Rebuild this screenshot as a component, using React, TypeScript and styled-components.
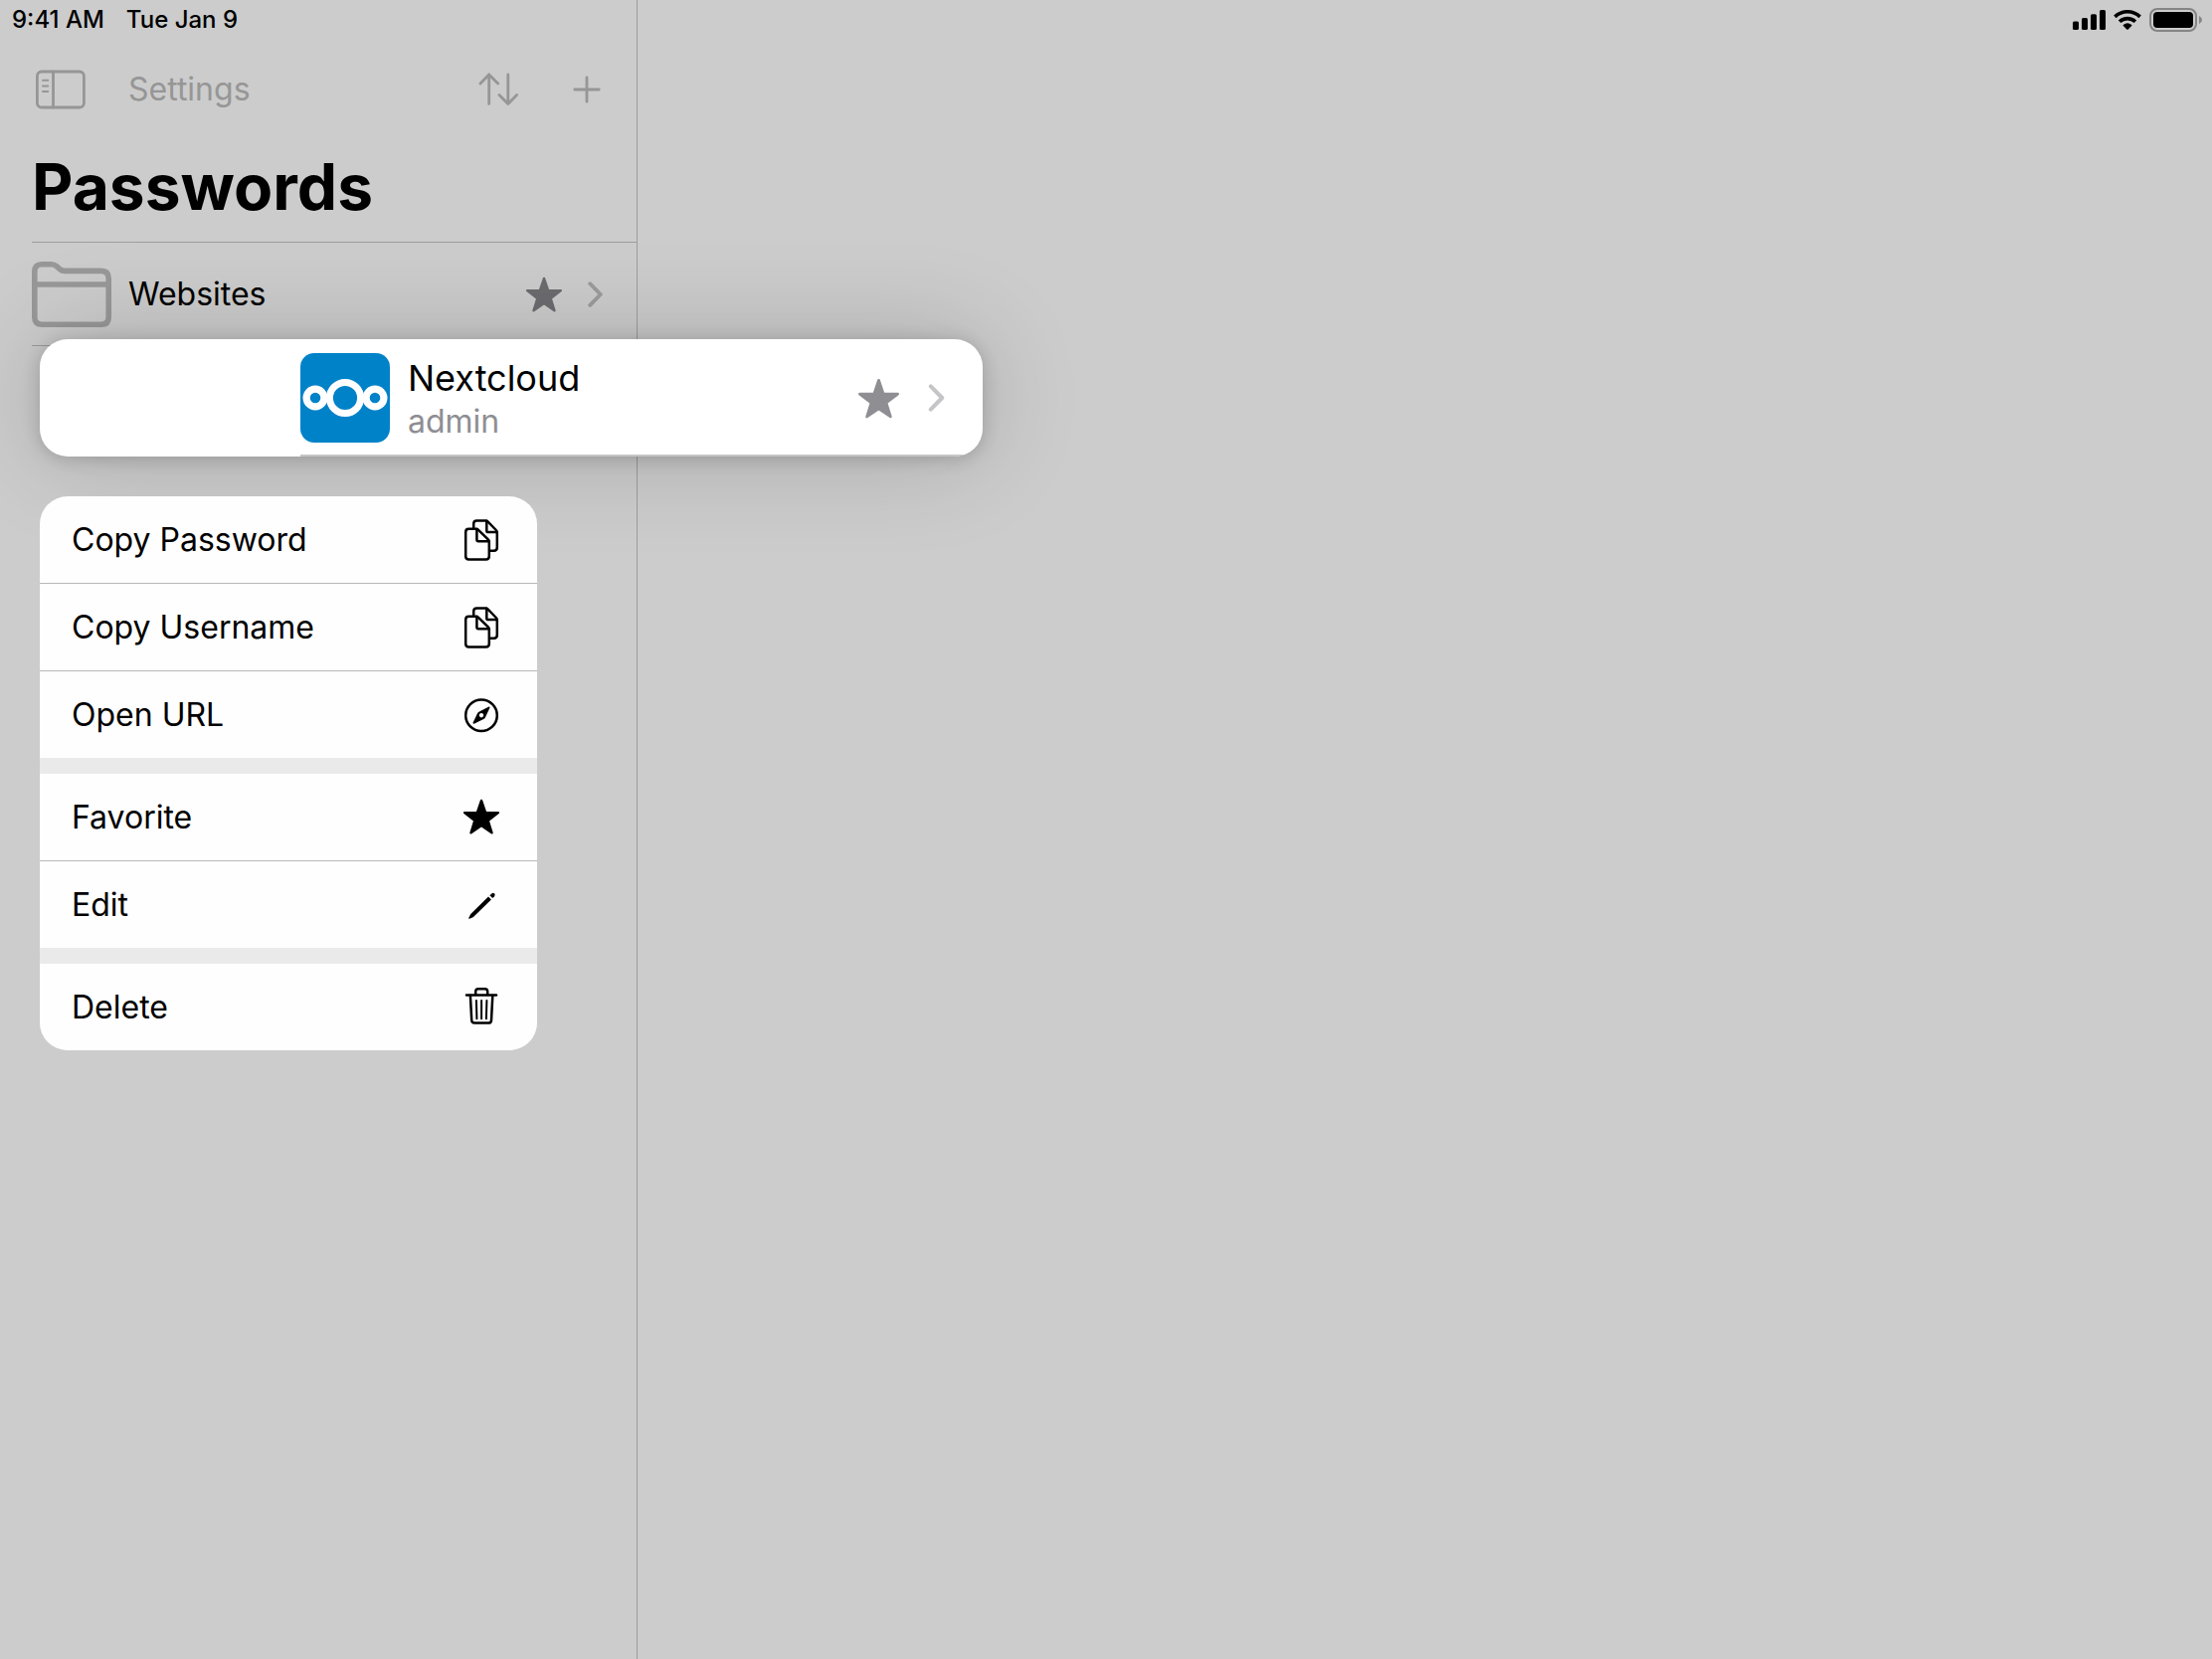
import React from "react";
import styled, { createGlobalStyle } from "styled-components";

const GlobalStyle = createGlobalStyle`
  *, *::before, *::after { box-sizing: border-box; }
  body {
    margin: 0;
    background: #cccccc;
    color: #000;
    font-family: Inter, "Liberation Sans", sans-serif;
  }
  button, a { font: inherit; color: inherit; }
`;

const Screen = styled.div`
  position: relative;
  display: grid;
  grid-template-columns: 641px 1fr;
  min-height: 100vh;
  overflow: hidden;
`;

const Sidebar = styled.aside`
  border-right: 1px solid #9d9d9f;
`;

const Detail = styled.main`
  min-width: 0;
`;

const StatusBar = styled.div<{ $end?: boolean }>`
  display: flex;
  align-items: center;
  justify-content: ${(p) => (p.$end ? "flex-end" : "flex-start")};
  gap: ${(p) => (p.$end ? "8px" : "22px")};
  height: 40px;
  padding: ${(p) => (p.$end ? "0 10px 0 0" : "0 0 0 12px")};
  font-size: 24px;
  font-weight: 500;
  line-height: 40px;
`;

const Toolbar = styled.nav`
  display: flex;
  align-items: center;
  height: 100px;
  padding: 0 36px 0 34px;
`;

const ToolButton = styled.button<{ $gap?: number }>`
  display: flex;
  align-items: center;
  padding: 0;
  margin-left: ${(p) => p.$gap ?? 0}px;
  border: 0;
  background: none;
  color: #969696;
  font-size: 32px;
  line-height: 40px;
`;

const Spacer = styled.span`
  flex: 1;
`;

const Title = styled.h1`
  margin: 0 0 0 32px;
  padding: 8px 0 15px;
  border-bottom: 1px solid #9d9d9f;
  font-size: 64px;
  font-weight: 700;
  line-height: 80px;
`;

const FolderRow = styled.a`
  display: flex;
  align-items: center;
  height: 104px;
  margin-left: 32px;
  padding-right: 34px;
  border-bottom: 1px solid #9d9d9f;
  text-decoration: none;
  font-size: 32px;
  line-height: 40px;
`;

const FolderName = styled.span`
  flex: 1;
  margin-left: 17px;
`;

const Overlay = styled.div`
  position: absolute;
  top: 341px;
  left: 40px;
  display: flex;
  flex-direction: column;
  align-items: flex-start;
  gap: 40px;
`;

const Preview = styled.a`
  display: flex;
  align-items: stretch;
  width: 948px;
  height: 118px;
  padding-left: 262px;
  border-radius: 28px;
  overflow: hidden;
  background: #fff;
  text-decoration: none;
  box-shadow: 0 2px 18px rgba(0, 0, 0, 0.18), 0 0 100px rgba(0, 0, 0, 0.18);
`;

const PreviewContent = styled.span`
  flex: 1;
  display: flex;
  align-items: center;
  padding-right: 38px;
  box-shadow: inset 0 -2px #c6c6c8;
`;

const PreviewText = styled.span`
  flex: 1;
  display: flex;
  flex-direction: column;
  margin-left: 18px;
  padding-top: 2px;
`;

const EntryName = styled.span`
  font-size: 36px;
  line-height: 46px;
`;

const EntryUser = styled.span`
  color: #8e8e93;
  font-size: 32px;
  line-height: 42px;
`;

const Menu = styled.div`
  display: flex;
  flex-direction: column;
  gap: 16px;
  width: 500px;
  border-radius: 28px;
  overflow: hidden;
  background: #eaeaea;
`;

const MenuGroup = styled.div`
  display: flex;
  flex-direction: column;
  gap: 1px;
  background: #b8b8b8;
`;

const MenuItem = styled.button`
  display: flex;
  align-items: center;
  justify-content: space-between;
  height: 87px;
  padding: 0 32px;
  border: 0;
  background: #fefefe;
  text-align: left;
  font-size: 32px;
  line-height: 40px;
`;

const Icon = styled.svg<{ $color?: string; $after?: number }>`
  display: block;
  flex: none;
  margin-right: ${(p) => p.$after ?? 0}px;
  color: ${(p) => p.$color ?? "inherit"};
  fill: none;
  stroke: currentColor;
  stroke-linecap: round;
  stroke-linejoin: round;
`;

const StarShape = () => (
  <path
    fill="currentColor"
    strokeWidth="2.4"
    d="M24 6.9 L28.1 18.9 L40.9 19.1 L30.7 27 L34.5 39.3 L24 32.1 L13.5 39.3 L17.3 27 L7.1 19.1 L19.9 18.9 Z"
  />
);

type StarProps = { size: number; color: string; after: number };

const StarIcon = ({ size, color, after }: StarProps) => (
  <Icon width={size} height={size} viewBox="5 4 38 38" $color={color} $after={after} aria-hidden>
    <StarShape />
  </Icon>
);

const Chevron = ({ width, height, color }: { width: number; height: number; color: string }) => (
  <Icon width={width} height={height} viewBox="0 0 15 26" $color={color} aria-hidden>
    <path strokeWidth="3.8" d="M2.2 2.2 L12.8 13 L2.2 23.8" />
  </Icon>
);

const CopyIcon = () => (
  <Icon width={48} height={47} viewBox="0 0 48 47" strokeWidth="2.5" aria-hidden>
    <path d="M11.4 12.8 H18.6 Q20 12.8 21 13.8 L30.8 23.4 Q31.8 24.4 31.8 25.8 V40.3 Q31.8 43.5 28.6 43.5 H11.4 Q8.2 43.5 8.2 40.3 V16 Q8.2 12.8 11.4 12.8 Z" />
    <path d="M19.4 13 V23.6 Q19.4 25.2 21 25.2 H31.6" />
    <path d="M16.2 12 V7.6 Q16.2 4.4 19.4 4.4 H28 Q29.4 4.4 30.4 5.4 L38.8 14 Q39.8 15 39.8 16.4 V31.6 Q39.8 34.8 36.6 34.8 H32.6" />
    <path d="M29.3 4.8 V14.4 Q29.3 16 30.9 16 H39.4" />
  </Icon>
);

const CompassIcon = () => (
  <Icon width={48} height={47} viewBox="0 0 48 47" aria-hidden>
    <circle cx="24" cy="24.2" r="15.8" strokeWidth="2.5" />
    <path
      fill="currentColor"
      stroke="none"
      fillRule="evenodd"
      d="M31.6 15.6 Q32.8 15.5 32.4 16.8 L28.1 26.1 Q27.5 27.4 26.2 28 L16.6 32.8 Q15.3 33 15.6 31.6 L20 22.3 Q20.6 21 21.9 20.4 Z M24 22 a2.2 2.2 0 1 0 0.01 0 Z"
    />
  </Icon>
);

const MenuStarIcon = () => (
  <Icon width={48} height={47} viewBox="0 0 48 47" aria-hidden>
    <StarShape />
  </Icon>
);

const PencilIcon = () => (
  <Icon width={48} height={47} viewBox="0 0 48 47" aria-hidden>
    <path
      fill="currentColor"
      stroke="none"
      d="M31 15.6 L33.9 18.5 L16.2 35.7 Q15.9 36 15.5 36.2 L12 37.8 Q10.8 38 11.3 36.8 L13 33.4 Q13.2 33 13.5 32.7 Z"
    />
    <path
      fill="currentColor"
      stroke="none"
      d="M32.4 14.3 L34.4 12.4 Q35.8 11.2 37.1 12.5 Q38.3 13.8 37.1 15.2 L35.2 17.1 Z"
    />
  </Icon>
);

const TrashIcon = () => (
  <Icon width={48} height={47} viewBox="0 0 48 47" strokeWidth="2.5" aria-hidden>
    <path d="M9 11.4 H39" />
    <path d="M18.2 11 V8 Q18.2 5.3 20.9 5.3 H27.5 Q30.2 5.3 30.2 8 V11" />
    <path d="M12.9 12 L14.2 36.8 Q14.4 39.6 17.2 39.6 H31 Q33.8 39.6 34 36.8 L35.3 12" />
    <path strokeWidth="2" d="M18.9 17 L19.4 35.2 M24.1 17 V35.2 M29.4 17 L28.9 35.2" />
  </Icon>
);

const SidebarIcon = () => (
  <Icon width={54} height={40} viewBox="0 0 54 40" aria-hidden>
    <rect x="3.4" y="2" width="47" height="36" rx="4.5" strokeWidth="2.8" />
    <path strokeWidth="2.8" d="M19.5 2 V38" />
    <path strokeWidth="2" d="M9 10.8 H14.2 M9 16.4 H14.2 M9 22 H14.2" />
  </Icon>
);

const SortIcon = () => (
  <Icon width={40} height={34} viewBox="0 0 40 34" strokeWidth="2.8" aria-hidden>
    <path d="M10.7 31.4 V2 M1.9 11 L10.7 2 L19.7 11" />
    <path d="M29.8 2 V31.4 M21 22.4 L29.8 31.4 L38.6 22.4" />
  </Icon>
);

const PlusIcon = () => (
  <Icon width={28} height={28} viewBox="0 0 28 28" strokeWidth="2.8" aria-hidden>
    <path d="M14 1.8 V26.2 M1.8 14 H26.2" />
  </Icon>
);

const FolderIcon = () => (
  <Icon width={80} height={66} viewBox="0 0 80 66" $color="#989898" aria-hidden>
    <path
      strokeWidth="5.6"
      d="M2.8 10 Q2.8 2.8 10 2.8 H19.5 Q22.5 2.8 24.8 4.7 L28 7.5 Q30.3 9.4 33.3 9.4 H69.5 Q77.2 9.4 77.2 17 V56 Q77.2 63.2 70 63.2 H10 Q2.8 63.2 2.8 56 Z"
    />
    <path strokeWidth="5.6" d="M4 23 H76" />
  </Icon>
);

const NextcloudLogo = () => (
  <Icon width={90} height={90} viewBox="0 0 90 90" aria-hidden>
    <rect width="90" height="90" rx="14" fill="#0082c9" stroke="none" />
    <g stroke="#fff">
      <circle cx="45" cy="45" r="15.6" strokeWidth="7" />
      <circle cx="15" cy="45" r="8.9" strokeWidth="7.2" />
      <circle cx="75" cy="45" r="8.9" strokeWidth="7.2" />
    </g>
  </Icon>
);

const SignalIcon = () => (
  <Icon width={33} height={20} viewBox="0 0 33 20" aria-hidden>
    <g fill="currentColor" stroke="none">
      <rect x="0" y="11.5" width="6" height="8.5" rx="1.6" />
      <rect x="9" y="8" width="6" height="12" rx="1.6" />
      <rect x="18" y="4.2" width="6" height="15.8" rx="1.6" />
      <rect x="27" y="0" width="6" height="20" rx="1.6" />
    </g>
  </Icon>
);

const WifiIcon = () => (
  <Icon width={28} height={20} viewBox="0 0 28 20" aria-hidden>
    <g strokeWidth="3.6" strokeLinecap="butt">
      <path d="M1.4 6.9 A18 18 0 0 1 26.6 6.9" />
      <path d="M6.1 11.8 A11.3 11.3 0 0 1 21.9 11.8" />
    </g>
    <path
      fill="currentColor"
      stroke="none"
      d="M14 19.8 Q13.6 19.8 13.2 19.4 L9.6 15.8 Q9.3 15.3 9.8 14.9 Q14 11.8 18.2 14.9 Q18.7 15.3 18.4 15.8 L14.8 19.4 Q14.4 19.8 14 19.8 Z"
    />
  </Icon>
);

const BatteryIcon = () => (
  <Icon width={53} height={24} viewBox="0 0 53 24" aria-hidden>
    <rect x="1" y="1" width="46" height="22" rx="7" stroke="#858585" strokeWidth="2" />
    <rect x="4" y="4" width="40" height="16" rx="4" fill="currentColor" stroke="none" />
    <path d="M50 8 Q53 9.4 53 12 Q53 14.6 50 16 Z" fill="#858585" stroke="none" />
  </Icon>
);

const menuGroups = [
  [
    { label: "Copy Password", icon: <CopyIcon /> },
    { label: "Copy Username", icon: <CopyIcon /> },
    { label: "Open URL", icon: <CompassIcon /> },
  ],
  [
    { label: "Favorite", icon: <MenuStarIcon /> },
    { label: "Edit", icon: <PencilIcon /> },
  ],
  [{ label: "Delete", icon: <TrashIcon /> }],
];

export default function App() {
  return (
    <>
      <GlobalStyle />
      <Screen>
        <Sidebar>
          <StatusBar>
            <span>9:41 AM</span>
            <span>Tue Jan 9</span>
          </StatusBar>
          <Toolbar>
            <ToolButton aria-label="Toggle sidebar">
              <SidebarIcon />
            </ToolButton>
            <ToolButton $gap={41}>Settings</ToolButton>
            <Spacer />
            <ToolButton aria-label="Sort">
              <SortIcon />
            </ToolButton>
            <ToolButton aria-label="Add" $gap={55}>
              <PlusIcon />
            </ToolButton>
          </Toolbar>
          <Title>Passwords</Title>
          <FolderRow href="#websites">
            <FolderIcon />
            <FolderName>Websites</FolderName>
            <StarIcon size={38} color="#6c6c70" after={25} />
            <Chevron width={15} height={26} color="#9c9c9e" />
          </FolderRow>
        </Sidebar>
        <Detail>
          <StatusBar $end>
            <SignalIcon />
            <WifiIcon />
            <BatteryIcon />
          </StatusBar>
        </Detail>
        <Overlay>
          <Preview href="#nextcloud">
            <PreviewContent>
              <NextcloudLogo />
              <PreviewText>
                <EntryName>Nextcloud</EntryName>
                <EntryUser>admin</EntryUser>
              </PreviewText>
              <StarIcon size={43} color="#8e8e93" after={28} />
              <Chevron width={17} height={28} color="#c5c5c7" />
            </PreviewContent>
          </Preview>
          <Menu role="menu">
            {menuGroups.map((group, i) => (
              <MenuGroup key={i} role="group">
                {group.map((item) => (
                  <MenuItem key={item.label} role="menuitem">
                    {item.label}
                    {item.icon}
                  </MenuItem>
                ))}
              </MenuGroup>
            ))}
          </Menu>
        </Overlay>
      </Screen>
    </>
  );
}
